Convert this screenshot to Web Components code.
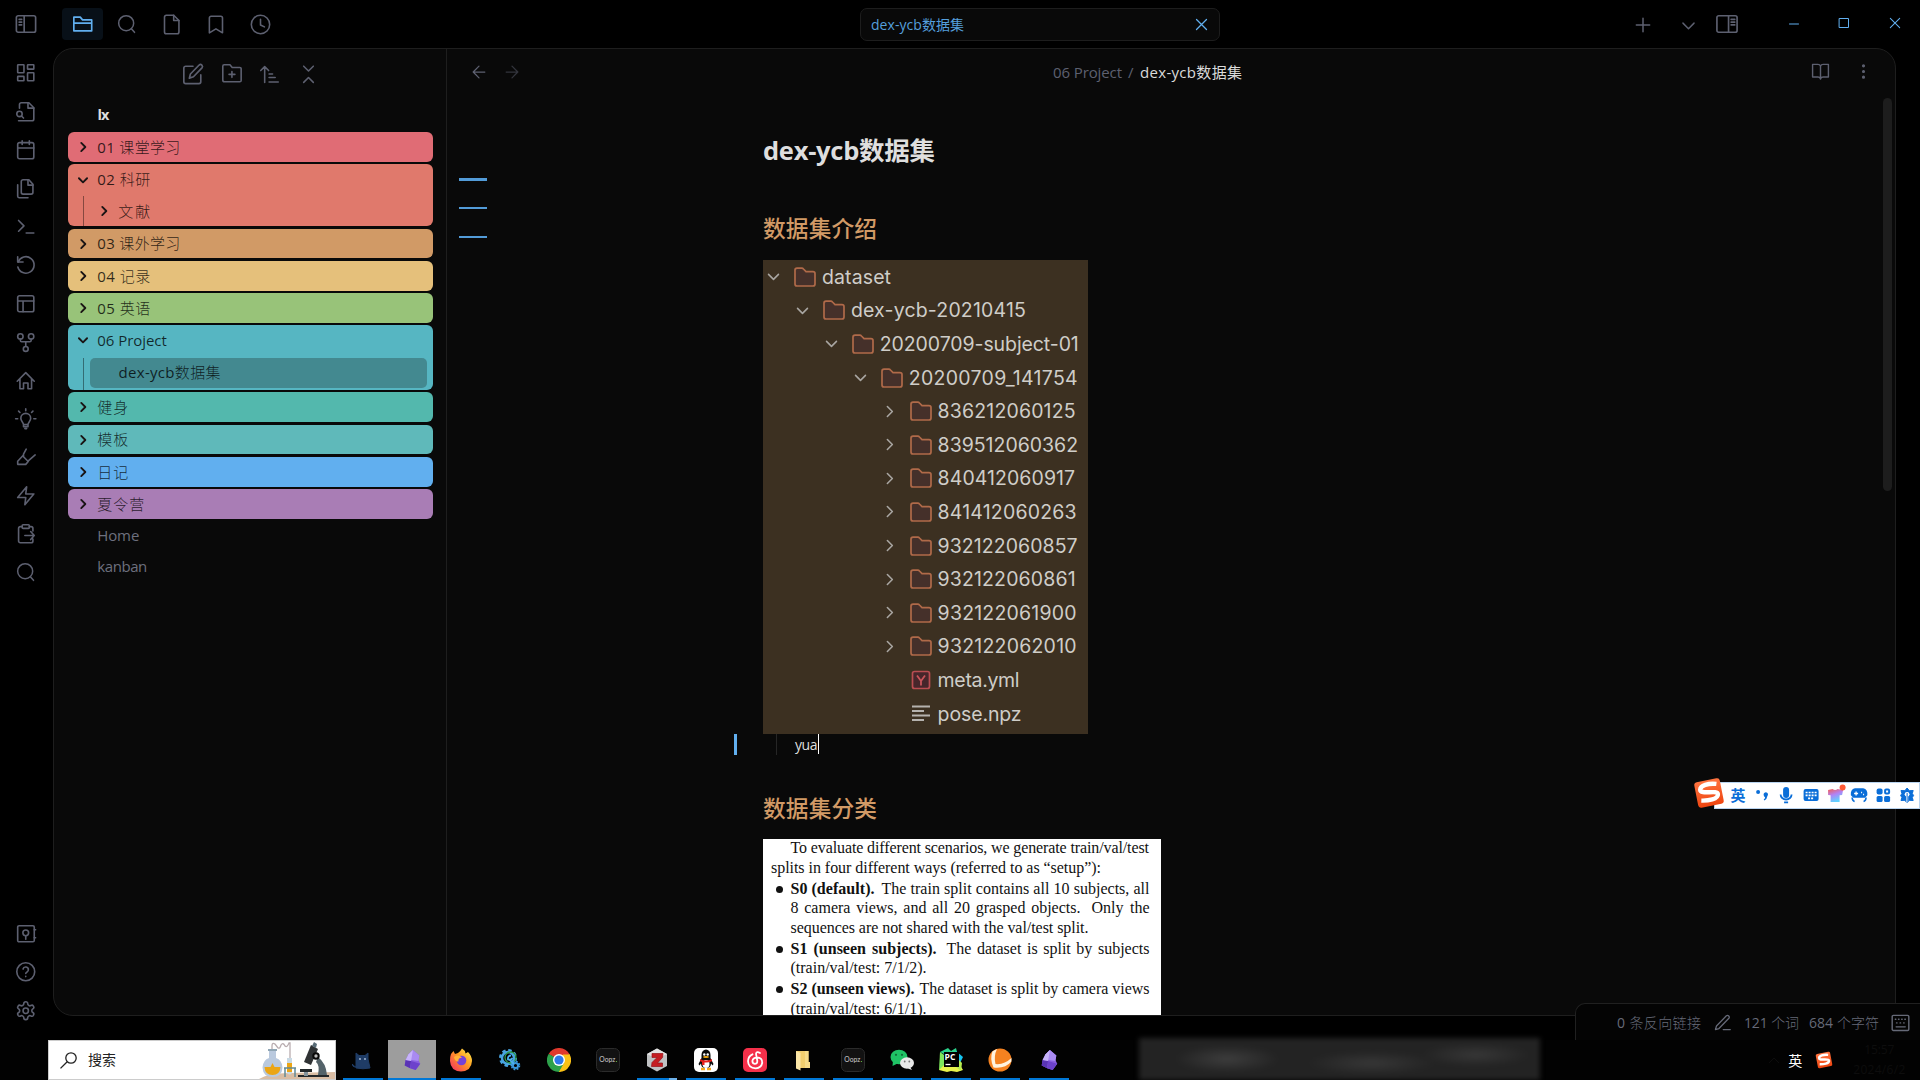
<!DOCTYPE html>
<html lang="zh-CN">
<head>
<meta charset="utf-8">
<title>dex-ycb数据集</title>
<style>
html,body{margin:0;padding:0;background:#000;overflow:hidden}
body{width:1920px;height:1080px;font-family:"Open Sans","Noto Sans CJK SC",sans-serif}
</style>
</head>
<body>
<notes-desktop></notes-desktop>
<script>
const define=(name,html,setup)=>customElements.define(name,class extends HTMLElement{
  constructor(){super();this.attachShadow({mode:'open'})}
  connectedCallback(){
    if(this.ready)return;this.ready=true;
    this.shadowRoot.innerHTML=typeof html==='function'?html(this):html;
    if(setup)setup(this);
  }
});

/* Text set to an exact measure by distributing the difference between letters or words.
   With "mix", Latin runs keep a regular weight beside light CJK glyphs. */
define('fit-text',`<style>:host{display:block;white-space:pre;flex:none}span{display:inline-block}</style><span><slot></slot></span>`,el=>{
  const s=el.shadowRoot.querySelector('span'),w=+el.getAttribute('w'),t=el.textContent;
  if(el.hasAttribute('mix'))el.innerHTML=t.replace(/[\x20-\x7e]+/g,'<span style="font-weight:400">$&</span>');
  el.style.width=w+'px';
  const word=el.hasAttribute('words'),n=word?t.split(' ').length-1:t.length-1;
  const d=(w-s.getBoundingClientRect().width)/Math.max(n,1);
  s.style[word?'wordSpacing':'letterSpacing']=d+'px';
});

const I={
 left:'<rect x="1.5" y="3" width="21" height="18" rx="2"/><path d="M10 3v18M4.5 7h2.8M4.5 10h2.8M4.5 13h2.8"/>',
 right:'<rect x="1" y="3" width="22" height="18" rx="2"/><path d="M13.7 3v18M16.5 7h4M16.5 10h4M16.5 13h4"/>',
 folderopen:'<path d="M2 19.5V4.5h7l2.5 3H21.5v12zM2 11h19.5" stroke-linejoin="round"/>',
 search:'<circle cx="11" cy="11" r="9"/><path d="m21 22-3.8-4.3"/>',
 file:'<path d="M14.5 1.5H6a2 2 0 0 0-2 2v17a2 2 0 0 0 2 2h12.500a2 2 0 0 0 2-2V7.500z"/><path d="M14.500 1.500v6h6"/>',
 bookmark:'<path d="m20 21.500-7.500-4.500L5 21.500V4.500a2 2 0 0 1 2-2h11a2 2 0 0 1 2 2z"/>',
 clock:'<circle cx="12" cy="12" r="10.500"/><path d="M12 6v6.500l4.500 2.200"/>',
 dash:'<rect x="3" y="3" width="7" height="9" rx=".6"/><rect x="14" y="3" width="7" height="5" rx=".6"/><rect x="14" y="12" width="7" height="9" rx=".6"/><rect x="3" y="16" width="7" height="5" rx=".6"/>',
 filesearch:'<path d="M5 8V4a2 2 0 0 1 2-2h8.500L21 7.500V20a2 2 0 0 1-2 2H4"/><path d="M14.500 2v6H21"/><circle cx="5" cy="14.500" r="3"/><path d="m9.500 19-2.300-2.300"/>',
 calendar:'<rect x="3" y="4" width="18" height="18" rx="2"/><path d="M16 2v4M8 2v4M3 10h18"/>',
 copy:'<path d="M15.500 2H9a2 2 0 0 0-2 2v12a2 2 0 0 0 2 2h9a2 2 0 0 0 2-2V7z"/><path d="M14.500 2v6H20M3 7.600V20.500a1.500 1.500 0 0 0 1.500 1.500H14.500"/>',
 term:'<path d="m4 17 6-6-6-6M12.500 19H21"/>',
 undo:'<path d="M3 3v6h6"/><path d="M3.500 9a9.200 9.200 0 1 1-.3 5.500"/>',
 layout:'<rect x="3" y="3" width="18" height="18" rx="2"/><path d="M3 9h18M9 9v12"/>',
 fork:'<circle cx="12" cy="20" r="2.700"/><circle cx="6" cy="6" r="3"/><circle cx="18" cy="6" r="3"/><path d="M6 9v1.500A1.500 1.500 0 0 0 7.500 12h9a1.500 1.500 0 0 0 1.500-1.500V9M12 12v5"/>',
 home:'<path d="M2.500 12.500 12 3l9.500 9.500M5.500 10v11H9.500v-6.500h5V21h4V10"/>',
 bulb:'<path d="M9.500 18.500C9.500 16 6.500 15 6.500 11.500a5.500 5.500 0 0 1 11 0c0 3.500-3 4.500-3 7v2.500h-5zM9.500 18.500h5M12 3V1M5.500 5 4 3.500M18.500 5 20 3.500M3 12H.700M23.300 12H21M11 23h2"/>',
 marker:'<path d="M12.500 3.500 9.500 9v3l5 5 8-7M9.500 10 3 17v3.500h9l3-3.500"/>',
 zap:'<path d="M13 2 3 14h9l-1 8 10-12h-9z"/>',
 clip:'<rect x="8" y="2" width="8" height="4" rx="1"/><path d="M16 4h2a2 2 0 0 1 2 2v3M20 18v2a2 2 0 0 1-2 2H6a2 2 0 0 1-2-2V6a2 2 0 0 1 2-2h2M11 14h10.500M17.500 9.500l4 4.500-4 4.500"/>',
 vault:'<rect x="3" y="3" width="18.500" height="18" rx="1.500"/><circle cx="12" cy="11" r="3.200"/><path d="M12 14.200V18M21.500 7.500h1.500M21.500 16.500h1.500"/>',
 help:'<circle cx="12" cy="12" r="10"/><path d="M9 9a3 3 0 0 1 5.900 1c0 2-2.900 2.500-2.900 4M12 17v.4"/>',
 gear:'<circle cx="12" cy="12" r="3"/><path d="M12.200 2h-.4a2 2 0 0 0-2 2v.2a2 2 0 0 1-1 1.700l-.4.300a2 2 0 0 1-2 0l-.2-.1a2 2 0 0 0-2.700.7l-.2.400a2 2 0 0 0 .7 2.700l.2.100a2 2 0 0 1 1 1.700v.5a2 2 0 0 1-1 1.700l-.2.100a2 2 0 0 0-.7 2.700l.2.400a2 2 0 0 0 2.700.7l.2-.1a2 2 0 0 1 2 0l.4.300a2 2 0 0 1 1 1.700v.2a2 2 0 0 0 2 2h.4a2 2 0 0 0 2-2v-.2a2 2 0 0 1 1-1.700l.4-.3a2 2 0 0 1 2 0l.2.100a2 2 0 0 0 2.700-.7l.2-.4a2 2 0 0 0-.7-2.700l-.2-.1a2 2 0 0 1-1-1.700v-.5a2 2 0 0 1 1-1.700l.2-.1a2 2 0 0 0 .7-2.700l-.2-.4a2 2 0 0 0-2.700-.7l-.2.100a2 2 0 0 1-2 0l-.4-.3a2 2 0 0 1-1-1.700V4a2 2 0 0 0-2-2z"/>',
 edit:'<path d="M12 3.500H4A2 2 0 0 0 2 5.500V20.500a2 2 0 0 0 2 2H18.500a2 2 0 0 0 2-2V13"/><path d="M18.700 2.200a2.200 2.200 0 0 1 3.100 3.100L12.500 15l-4.500 1.500L9.200 12z"/>',
 newfolder:'<path d="M4 21h17a1.500 1.500 0 0 0 1.500-1.500V6.500A1.500 1.500 0 0 0 21 5h-8.500L10 2H3.500A1.500 1.500 0 0 0 2 3.500v15.500a2 2 0 0 0 2 2zM12.200 9.500v6.500M9 12.700h6.500"/>',
 sort:'<path d="M6.500 21V3M2 7.500 6.500 3 11 7.500M11.500 11.500h4M11.500 15.500H18.500M11.500 20.500H22"/>',
 collapse:'<path d="m6.500 2.500 5.500 5.500 5.500-5.500M6.500 21l5.500-5.500 5.500 5.500"/>',
 back:'<path d="M19 12H5M12 19l-7-7 7-7"/>', fwd:'<path d="M5 12h14M12 5l7 7-7 7"/>',
 book:'<path d="M2 3h6.500A3.500 3.500 0 0 1 12 5.500 3.500 3.500 0 0 1 15.500 3H22v16h-6.500A3.500 3.500 0 0 0 12 21.500 3.500 3.500 0 0 0 8.500 19H2zM12 5.500V21"/>',
 dots:'<g fill="currentColor"><circle cx="12" cy="4" r="1.300"/><circle cx="12" cy="12" r="1.300"/><circle cx="12" cy="20" r="1.300"/></g>',
 plus:'<path d="M12 4v16M4 12h16"/>', down:'<path d="m5 9 7 7 7-7"/>', rightc:'<path d="m9 5 7 7-7 7"/>',
 x:'<path d="M4 4l16 16M20 4 4 20"/>', min:'<path d="M3 12h18"/>', max:'<rect x="3" y="3" width="18" height="18"/>',
 pen:'<path d="M17.500 2.500a2.500 2.500 0 0 1 3.500 3.500L7 20.500l-5 1.500 1.500-5zM13 22h10"/>',
 kbd:'<rect x="1.500" y="3" width="21" height="19" rx="1.500"/><path d="M5.500 8h.6M9.500 8h.6M13.500 8h.6M17.500 8h.6M7 12.500h.6M11.500 12.500h.6M16 12.500h.6M6.500 17.500h11.500"/>'
};
define('line-icon',el=>{
  const s=el.getAttribute('size')||22,w=el.getAttribute('sw')||1.8;
  return `<style>:host{display:inline-flex;flex:none;align-items:center;justify-content:center}svg{display:block;overflow:visible}</style>
  <svg width="${s}" height="${s}" viewBox="0 0 24 24" fill="none" stroke="currentColor" stroke-width="${w}" stroke-linecap="round" stroke-linejoin="round">${I[el.getAttribute('name')]}</svg>`});

define('title-bar',`<style>
:host{display:flex;height:48px;align-items:flex-start;color:#5d6070;box-sizing:border-box}
.l,.r{display:flex;height:48px;align-items:center}
.l line-icon{width:44.400px;height:48px}
.l .t{width:52px;margin-right:10px}
.l .on{width:41px;height:32px;border-radius:4px;background:#081018;color:#61afef;margin-right:2px}
.l{width:860px;flex:none}
.tab{display:flex;flex:none;align-items:center;justify-content:space-between;box-sizing:border-box;width:360px;height:33px;margin-top:8px;border:1px solid #1d1d1d;border-radius:7px;background:#090909;color:#559fdc;padding:0 10px 0 10px;font-size:14px;line-height:30px}
.tab line-icon{color:#61afef}
.r{margin-left:400px;flex:1}
.r .b{color:#61afef}
</style>
<div class="l"><line-icon class="t" name="left" size="22"></line-icon><line-icon class="on" name="folderopen"></line-icon><line-icon name="search" size="20"></line-icon><line-icon name="file" size="21"></line-icon><line-icon name="bookmark" size="21"></line-icon><line-icon name="clock" size="21"></line-icon></div>
<div class="tab"><fit-text w="93">dex-ycb数据集</fit-text><line-icon name="x" size="15" sw="2"></line-icon></div>
<div class="r"><line-icon name="plus" size="20" style="width:46px;margin-top:2px"></line-icon><line-icon name="down" size="19" style="width:44px;margin-top:2px"></line-icon><line-icon name="right" style="width:34px" size="22"></line-icon><line-icon class="b" name="min" size="12" sw="2" style="margin-left:27px;width:46px"></line-icon><line-icon class="b" name="max" size="12" sw="2" style="width:54px;margin-top:-2px"></line-icon><line-icon class="b" name="x" size="14" sw="1.800" style="width:48px;margin-top:-2px"></line-icon></div>`);

define('side-ribbon',`<style>
:host{display:flex;flex-direction:column;justify-content:space-between;width:53px;box-sizing:border-box;padding:6px 0 19px;color:#5d6070}
div{display:flex;flex-direction:column}line-icon{height:38.400px;width:52px}
</style><div>${['dash','filesearch','calendar','copy','term','undo','layout','fork','home','bulb','marker','zap','clip','search'].map(n=>`<line-icon name="${n}" size="${n==='search'?20:21.500}"></line-icon>`).join('')}</div>
<div style="margin-bottom:-8.500px">${['vault','help','gear'].map(n=>`<line-icon name="${n}" size="21.500"></line-icon>`).join('')}</div>`);

/* One row of the file tree. */
define('tree-row',el=>`<style>
:host{display:flex;align-items:center;height:${el.getAttribute('h')||30}px;font-size:15px;line-height:29px;box-sizing:border-box}
line-icon{width:30px;height:30px;color:#1a1414}i{width:30px}
::slotted(fit-text){margin-left:-.7px}
</style>${el.hasAttribute('icon')?`<line-icon name="${el.getAttribute('icon')}" size="14" sw="3.200"></line-icon>`:'<i></i>'}<slot></slot>`);
define('tree-group',el=>`<style>
:host{display:flex;flex-direction:column;border-radius:6px;box-sizing:border-box;background:${el.getAttribute('bg')};height:${el.getAttribute('h')}px;margin-bottom:${el.getAttribute('gap')||2.500}px;color:rgba(0,0,0,.78);overflow:hidden}
</style><slot></slot>`);

define('file-pane',`<style>
:host{display:flex;flex-direction:column;width:393px;box-sizing:border-box;border-right:1px solid #1e1e1e;color:#6a6d7c;font-weight:300}
nav{display:flex;padding:6px 0 1px 120px;height:38px;align-items:center;color:#5d6070}
nav line-icon{width:38.300px;height:38px}
.v{height:38px;margin-left:43.500px;line-height:41px;color:#ddd;font-weight:700;font-size:14.500px}
.tree{display:flex;flex-direction:column;padding:0 13px 0 14px}
.sub{display:flex;margin-left:15px;border-left:1px solid rgba(0,0,0,.4);flex:1;box-sizing:border-box}
.sub tree-row{margin-left:6px}
.cur{background:rgba(40,70,70,.4);border-radius:5px;width:337px;margin-top:-.5px}
.cur fit-text{margin-left:-1.500px}
.f{color:#6d707e}
</style>
<nav><line-icon name="edit"></line-icon><line-icon name="newfolder" size="21.500"></line-icon><line-icon name="sort" size="21"></line-icon><line-icon name="collapse" size="21"></line-icon></nav>
<div class="v"><fit-text w="12">lx</fit-text></div>
<div class="tree">
<tree-group bg="#e06c75" h="30" gap="2"><tree-row icon="rightc"><fit-text mix w="83">01 课堂学习</fit-text></tree-row></tree-group>
<tree-group bg="#e0796c" h="62" gap="3"><tree-row icon="down" h="32" style="padding-bottom:1px"><fit-text mix w="53">02 科研</fit-text></tree-row><div class="sub"><tree-row icon="rightc" style="margin-left:5px"><fit-text mix w="32">文献</fit-text></tree-row></div></tree-group>
<tree-group bg="#d19a66" h="29" gap="3"><tree-row icon="rightc" h="29"><fit-text mix w="83">03 课外学习</fit-text></tree-row></tree-group>
<tree-group bg="#e5c07b" h="30" gap="2"><tree-row icon="rightc"><fit-text mix w="53">04 记录</fit-text></tree-row></tree-group>
<tree-group bg="#98c379" h="30" gap="2"><tree-row icon="rightc"><fit-text mix w="53">05 英语</fit-text></tree-row></tree-group>
<tree-group bg="#56b6c2" h="65" gap="2"><tree-row icon="down" h="33" style="padding-bottom:3px"><fit-text mix w="69.500">06 Project</fit-text></tree-row><div class="sub"><tree-row class="cur"><fit-text mix w="102">dex-ycb数据集</fit-text></tree-row></div></tree-group>
<tree-group bg="#53b8ad" h="30" gap="3"><tree-row icon="rightc"><fit-text mix w="31">健身</fit-text></tree-row></tree-group>
<tree-group bg="#5fb9ba" h="29" gap="3"><tree-row icon="rightc" h="29"><fit-text mix w="31">模板</fit-text></tree-row></tree-group>
<tree-group bg="#61afef" h="30" gap="2"><tree-row icon="rightc"><fit-text mix w="31">日记</fit-text></tree-row></tree-group>
<tree-group bg="#a97db5" h="30" gap="1"><tree-row icon="rightc"><fit-text mix w="47">夏令营</fit-text></tree-row></tree-group>
<tree-row class="f" h="31"><fit-text mix w="42">Home</fit-text></tree-row>
<tree-row class="f" h="31"><fit-text mix w="50">kanban</fit-text></tree-row>
</div>`);

const rows=[[0,'dataset',69],[1,'dex-ycb-20210415',175],[2,'20200709-subject-01',199],[3,'20200709_141754',169],[4,'836212060125',138],[4,'839512060362',140.500],[4,'840412060917',137.500],[4,'841412060263',139],[4,'932122060857',140],[4,'932122060861',138],[4,'932122061900',139],[4,'932122062010',139],['y','meta.yml',82],['t','pose.npz',84]];
define('dataset-tree',`<style>
:host{display:flex;flex-direction:column;width:325px;height:474px;background:#3c3021;box-sizing:border-box;font:400 19.500px Inter,sans-serif;color:#cfcdc8;overflow:hidden}
div{display:flex;align-items:center;height:33.600px;flex:none}
line-icon{width:21px;color:#a9a6a2}svg{flex:none;margin:0 6px 0 10px}
</style>${rows.map(([d,t,w])=>{const f=typeof d==='number',n=f?d:4;
return `<div style="padding-left:${n*28.900}px">${f?`<line-icon name="${d<4?'down':'rightc'}" size="17" sw="2.200"></line-icon>`:'<i style="width:21px"></i>'}<svg width="22" height="20" viewBox="0 0 22 20" fill="none">${
f?'<path d="M1 3.200A2 2 0 0 1 3 1.200h4.800q1 0 1.700.8L12 4.600h7a2 2 0 0 1 2 2V17a2 2 0 0 1-2 2H3a2 2 0 0 1-2-2z" fill="#45302a" stroke="#b06a49" stroke-width="1.700"/>'
:d==='y'?'<rect x="2.500" y="1.500" width="17" height="17" rx="2" fill="#47262b" stroke="#b94d52" stroke-width="1.700"/><path d="M7 5.500l4 5.500 4-5.500M11 11v4.500" stroke="#c9545a" stroke-width="1.800"/>'
:'<path d="M2 2.500h18M2 7h12M2 11.500h18M2 16h12" stroke="#b5b2ae" stroke-width="1.800"/>'}</svg><fit-text w="${w}">${t}</fit-text></div>`}).join('')}`);

define('paper-excerpt',`<style>
:host{display:flex;flex-direction:column;width:398px;height:177px;background:#fff;color:#111;font:16px/19.400px "Liberation Serif",serif;overflow:hidden;box-sizing:border-box}
div{display:flex;justify-content:space-between;width:359px;margin-left:27.500px;flex:none;height:19.400px}
.first{margin-top:-.6px}
.g{margin-top:1.600px}
.g::before{content:"";width:7px;height:7px;border-radius:50%;background:#111;margin:7px 7.500px 0 -14.500px;flex:none}
.g fit-text:last-child{margin-left:auto}
</style>
<div class="first"><fit-text w="358.500">To evaluate different scenarios, we generate train/val/test</fit-text></div>
<div style="margin-left:8px"><fit-text w="330">splits in four different ways (referred to as “setup”):</fit-text></div>
<div class="g"><fit-text w="84"><b>S0 (default).</b></fit-text><fit-text w="268" words>The train split contains all 10 subjects, all</fit-text></div>
<div><fit-text w="290" words>8 camera views, and all 20 grasped objects.</fit-text><fit-text w="58" words>Only the</fit-text></div>
<div><fit-text w="298">sequences are not shared with the val/test split.</fit-text></div>
<div class="g" style="margin-top:2px"><fit-text w="146" words><b>S1 (unseen subjects).</b></fit-text><fit-text w="203" words>The dataset is split by subjects</fit-text></div>
<div><fit-text w="136">(train/val/test: 7/1/2).</fit-text></div>
<div class="g" style="margin-top:1.600px"><fit-text w="124"><b>S2 (unseen views).</b></fit-text><fit-text w="230">The dataset is split by camera views</fit-text></div>
<div><fit-text w="136">(train/val/test: 6/1/1).</fit-text></div>`);

define('note-editor',`<style>
:host{display:flex;flex-direction:column;flex:1;min-width:0}
header{display:flex;align-items:center;height:45px;color:#5d6070;font-size:15px}
header .n{display:flex;width:606px;padding-left:15px;box-sizing:border-box}header .n line-icon{width:33px}
header .p{display:flex;gap:6px;line-height:44px}
.p b{font-weight:400;color:#dadada}
.body{display:flex;flex:1;min-height:0}
.out{display:flex;flex-direction:column;width:275px;padding:84px 0 0 12px;box-sizing:border-box}
.out i{width:28px;height:2px;background:#529bd8;margin-bottom:27px}.out i:first-child{height:3px;margin-bottom:26px}
article{display:flex;flex-direction:column;width:1174px;flex:1;padding-left:41px;min-height:0;overflow:hidden}
h1{margin:34.500px 0 0;font-size:25.500px;line-height:42px;height:42px;color:#dedede;font-weight:700}
h2{margin:0;font-size:22.700px;line-height:34px;height:34px;color:#d19a66;font-weight:500}
.line{display:flex;height:22px;margin-left:-29px;border-left:3px solid #61afef;font:400 14px/21px "Open Sans",sans-serif;color:#ddd}
.line div{margin-left:39px;border-left:1px solid #262626;padding-left:18px;display:flex}
.line i{width:1px;height:20px;background:#fff}
.scroll{width:9px;height:393px;border-radius:5px;background:#1d1d1d;margin:4px 3px 0 0}
</style>
<header><div class="n"><line-icon name="back" size="20" sw="1.500"></line-icon><line-icon name="fwd" size="20" sw="1.500" style="opacity:.5"></line-icon></div>
<div class="p"><fit-text w="69">06 Project</fit-text><span style="width:6px">/</span><b><fit-text w="102">dex-ycb数据集</fit-text></b></div>
<line-icon name="book" size="19" style="margin-left:569px"></line-icon><line-icon name="dots" size="17" style="margin-left:25px"></line-icon></header>
<div class="body"><div class="out"><i></i><i></i><i></i></div>
<article><h1><fit-text w="172">dex-ycb数据集</fit-text></h1>
<h2 style="margin-top:41px"><fit-text w="114">数据集介绍</fit-text></h2>
<dataset-tree style="margin-top:14.500px;flex:none"></dataset-tree>
<div class="line"><div><fit-text w="22.500">yua</fit-text><i></i></div></div>
<h2 style="margin-top:36.500px"><fit-text w="114">数据集分类</fit-text></h2>
<paper-excerpt style="margin-top:13.500px;flex:none"></paper-excerpt></article>
<div class="scroll"></div></div>`);

define('status-bar',`<style>
:host{display:flex;align-items:center;position:absolute;left:1575px;top:1003px;width:345px;height:37px;box-sizing:border-box;border:1px solid #202020;border-width:1px 0 0 1px;border-top-left-radius:10px;background:#040404;color:#666a78;font-size:14px;font-weight:300;padding-left:41px;line-height:37px}
</style><fit-text mix w="84">0 条反向链接</fit-text><line-icon name="pen" size="17" style="margin:0 13px"></line-icon><fit-text mix w="55">121 个词</fit-text><fit-text mix w="70" style="margin:0 12px 0 10px">684 个字符</fit-text><line-icon name="kbd" size="19" sw="1.800"></line-icon>`);

define('sogou-logo',el=>`<style>:host{display:block;flex:none}svg{display:block}</style><svg width="${el.getAttribute('size')}" height="${el.getAttribute('size')}" viewBox="0 0 32 32"><defs><linearGradient id="g" x2="0" y2="1"><stop stop-color="#ff7440"/><stop offset="1" stop-color="#ee4510"/></linearGradient></defs><g transform="rotate(-11 16 16)"><rect x="3" y="3" width="26" height="26" rx="3" fill="url(#g)"/><path d="M25 8.500C17 6 9 7 8 11c-1 5.500 17 3 16.500 8-.6 5-11 4.500-17.500 3" fill="none" stroke="#fff" stroke-width="4.400"/></g></svg>`);

define('ime-bar',`<style>
:host{position:absolute;left:1693px;top:777px;display:flex;align-items:center;height:32px;width:227px}
sogou-logo{z-index:1;position:relative}
.b{display:flex;align-items:center;background:#fff;border:1px solid #b9d4f0;box-sizing:border-box;height:27px;width:206px;margin:4px 0 0 -11px;padding-left:11px;color:#0a6ed8;font:700 15px/24px "Noto Sans CJK SC",sans-serif}
.b>*{width:24.200px;flex:none;display:block;text-align:center}
</style><sogou-logo size="32"></sogou-logo><div class="b"><span>英</span>
<svg height="20" viewBox="0 0 24 20" fill="#0a6ed8"><circle cx="8" cy="7" r="2"/><path d="M13.500 9.500a2.200 2.200 0 1 1 3.800 1.500q-.3 3-3 4.500l-.7-1q1.500-1 1.400-2.200-1.500-.8-1.500-2.800z"/></svg>
<svg height="20" viewBox="0 0 24 20"><rect x="9" y="2" width="6" height="11" rx="3" fill="#0a6ed8"/><path d="M6.500 9.500a5.500 5 0 0 0 11 0M10 17.300h4" fill="none" stroke="#0a6ed8" stroke-width="1.800"/></svg>
<svg height="20" viewBox="0 0 24 20"><rect x="4.500" y="4" width="15" height="12" rx="2" fill="#0a6ed8"/><path d="M6.500 7.500h11M6.500 10.300h11M9 13.300h6" stroke="#fff" stroke-width="1.700" stroke-dasharray="2 1"/></svg>
<svg height="22" viewBox="0 0 24 22"><defs><linearGradient id="s" x2=".4" y2="1"><stop stop-color="#f65a4e"/><stop offset=".5" stop-color="#b183f5"/><stop offset="1" stop-color="#60d2ff"/></linearGradient></defs><path d="M5 6 9.500 5q2.500 2 5 0L20 6l-1 5-2.500.3V18h-9v-6.700L5 11z" fill="url(#s)"/><circle cx="19.500" cy="3.500" r="3" fill="#ff5a36"/></svg>
<svg height="20" viewBox="0 0 24 20"><path d="M8 4h8q4 1 3.500 6l-2 2h-11l-2-2Q4 5 8 4zM5 12.500q0 3 2.500 4M19 12.500q0 3-2.500 4" fill="#0a6ed8" stroke="#0a6ed8" stroke-width="1.500"/><path d="M7 8.500h4M9 6.500v4M14 7.500h1M16 9.500h1" stroke="#fff" stroke-width="1.300"/></svg>
<svg height="20" viewBox="0 0 24 20" fill="#0a6ed8"><rect x="5.500" y="3.500" width="6" height="6" rx="2"/><rect x="14" y="4.500" width="4" height="4" rx="1" fill="none" stroke="#0a6ed8" stroke-width="2"/><rect x="5.500" y="11" width="6" height="6" rx="1.500"/><rect x="13" y="11" width="6" height="6" rx="1.500"/></svg>
<svg height="20" viewBox="0 0 24 20"><path d="M12 3l2.200 2.700 3.900-.2-.9 3 1.300 2-1.300 2 .9 3-3.900-.2L12 18l-2.200-2.700-3.900.2.900-3-1.300-2 1.300-2-.9-3 3.900.2z" fill="#0a6ed8" stroke="#0a6ed8" stroke-linejoin="round"/><circle cx="12" cy="9.300" r="2.400" fill="#fff"/><path d="M12 9v9" stroke="#fff" stroke-width="2.200"/><path d="M12 8v10" stroke="#0a6ed8" stroke-width="1"/></svg></div>`);

const crystal='<path d="M13 1 20 7l-1 5 2 4-5 7-6-2-6-3 1-6 3-6z" fill="#8a5fe0"/><path d="M13 1 8 6l3 6 8 1 1-6z" fill="#a98af2"/><path d="M5 12l6 1-1 8-6-3z" fill="#5a34b5"/><path d="M11 13l10 3-5 7-6-2z" fill="#6d42cc"/><path d="M13 1 8 6l-3 6 6 1z" fill="#c7b3fb"/>';
const oopz='<rect x=".5" y=".5" width="23" height="23" rx="5" fill="#121212" stroke="#2b2b2b"/><text x="3.300" y="14" textLength="16" lengthAdjust="spacingAndGlyphs" font-family="Lato" font-size="7" fill="#ccc">Oopz</text><circle cx="20.500" cy="13.500" r=".6" fill="#65c94b"/>';
const A={
cat:'<path d="M5 20V5l3 2.500h6L17 5v6l2 9q-7 1.500-14 0zM5 19q-4 0-3.500-3" fill="#1f3c66" stroke="#1f3c66"/><circle cx="9" cy="11" r=".9" fill="#adc2dc"/><circle cx="14" cy="11" r=".9" fill="#adc2dc"/>',
obs:crystal,
fox:'<defs><linearGradient id="f" x1="1" x2="0" y2="1"><stop stop-color="#fff44f"/><stop offset=".45" stop-color="#ff9a22"/><stop offset="1" stop-color="#f52668"/></linearGradient></defs><path d="M2 6 4.500 3 6 6l3-1q2-1 4-4.500 3 1.500 3.500 5L19 4q4 4 4 9-.5 10-11 10.500Q1.500 23 1 13q-.2-4 1-7z" fill="url(#f)"/><circle cx="12.500" cy="12.500" r="4.800" fill="#7542d8"/><path d="M5 9q4-3 8 .500l-3 1q-1 1.500-.5 3Q6 14 5 9z" fill="#ffb136"/>',
cog:'<circle cx="10" cy="10" r="7.500" fill="none" stroke="#48a4e0" stroke-width="3" stroke-dasharray="3.300 2.590"/><circle cx="10" cy="10" r="6" fill="none" stroke="#48a4e0" stroke-width="2.500"/><circle cx="12.500" cy="9.500" r="5.500" fill="none" stroke="#2f9a4a" stroke-width="1.300"/><circle cx="17.500" cy="17.500" r="2.600" fill="none" stroke="#3a97da" stroke-width="2"/><circle cx="17.500" cy="17.500" r="4" fill="none" stroke="#3a97da" stroke-width="1.600" stroke-dasharray="1.800 1.340"/><path d="m12 12 4 4M13 7.500q-3.500 0-3 4 3 1 4.500-1.500" fill="none" stroke="#4eb1ee" stroke-width="1.800"/>',
chrome:'<path d="M12 12 1.600 6A12 12 0 0 1 22.400 6z" fill="#e0392d"/><path d="M12 12 22.400 6A12 12 0 0 1 12 24z" fill="#fbc116"/><path d="M12 12v12A12 12 0 0 1 1.600 6z" fill="#2da14b"/><path d="M1.600 6 8 17l4-5zM12 24l6-9-6-3z" fill="#2da14b"/><path d="M12 24 17.500 14 12 12 16 6.500h6.500Q26 18 12 24z" fill="#fbc116"/><circle cx="12" cy="12" r="6" fill="#fff"/><circle cx="12" cy="12" r="4.600" fill="#2d78ea"/>',
oopz,
zot:'<path d="M12 .5 22 6v12l-10 5.500L2 18V6z" fill="#bfc1c3"/><path d="M12 .5 22 6l-10 5L2 6z" fill="#e3e3e3"/><path d="M7 5.500h11l-.5 4-5 5.500h5v3.500H6.500l.5-4 5-5H7z" fill="#c51d22" stroke="#941217" stroke-width=".7"/>',
qq:'<rect width="24" height="24" rx="5" fill="#fff"/><path d="M7 21h4M13 21h4" stroke="#f4a91c" stroke-width="2.500"/><path d="M7.500 10V7a4.500 5.500 0 0 1 9 0v3l3 6-1 1.500-1.500-2q0 4.500-5 4.500t-5-4.500l-1.500 2-1-1.500z" fill="#0c0c0c"/><ellipse cx="12" cy="16" rx="3.500" ry="4" fill="#fff"/><path d="M6 11q6 3 12 0v2.200q-6 2.500-12 0zM8 13h2.500v4H8z" fill="#e71f19"/><circle cx="10.300" cy="6.500" r="1.200" fill="#fff"/><circle cx="13.700" cy="6.500" r="1.200" fill="#fff"/><ellipse cx="12" cy="9" rx="3" ry="1" fill="#f6ab12"/>',
net:'<rect width="24" height="24" rx="5" fill="#f5304a"/><path d="M17 5q-3.500-2-4 .8l1.300 7q.2 3-2.600 3-2.500-.3-2.300-3 .5-3 4.600-3.300 5.500 0 5.200 5.500-1 5-6.500 5.300-7.500-.3-7.700-7.300Q5.300 8 9.500 6.300" fill="none" stroke="#fff" stroke-width="1.800" stroke-linecap="round"/>',
dir:'<path d="M4 3h12.500v12H18v5H8z" fill="#f2cf6f"/><path d="M4 3l4.500 2v17.500L4 20.500z" fill="#fbe6a6"/><path d="M13 3h3.500v11H18v6h-5z" fill="#f7dc89"/>',
wx:'<ellipse cx="9" cy="9" rx="8.500" ry="7.300" fill="#1fc365"/><path d="M3 13l-.5 5 5-2.500z" fill="#1fc365"/><circle cx="6" cy="6.800" r="1.100" fill="#126a38"/><circle cx="12" cy="6.800" r="1.100" fill="#126a38"/><ellipse cx="17" cy="15" rx="7" ry="5.800" fill="#e9e9e9"/><path d="M20 19l2 3-4-1.500z" fill="#e9e9e9"/><circle cx="14.700" cy="13.500" r=".9" fill="#777"/><circle cx="19.300" cy="13.500" r=".9" fill="#777"/>',
pc:'<path d="M1 4 9 0l3 3 5-3 1 4-7 5z" fill="#2bd38b"/><path d="M17 3l7 6-3 6-6-5z" fill="#15c4f0"/><path d="M1 4l7 5-2 11-6 2z" fill="#7fe85c"/><path d="M0 22l5-5h16l3 5-6 2-6-1-4 1z" fill="#e9f34c"/><path d="M19 11l4 4-1 8-5-4z" fill="#b6ec50"/><rect x="5" y="4" width="15" height="15" fill="#000"/><text x="5.600" y="11.800" font-family="Open Sans" font-weight="700" font-size="8.500" fill="#fff">PC</text><path d="M6.500 16.500h5" stroke="#fff" stroke-width="1.300"/>',
ora:'<circle cx="12" cy="12" r="11.500" fill="#f58220"/><path d="M9 .9 4.500 3.300Q1.500 11 5.500 19.500 17 21 23.400 13.500l.1-3.500Q16 17 7.500 16 5.500 8 9 .9z" fill="#fff3df"/>'};
define('app-button',el=>{const on=el.hasAttribute('active'),i=el.getAttribute('icon');return `<style>
:host{display:flex;flex-direction:column;align-items:center;width:49px;height:40px;flex:none}
.b{width:48px;height:38px;display:flex;align-items:center;justify-content:center;box-sizing:border-box;padding-top:2px;${on?'background:#9d9d9d':''}}
.u{height:2px;width:${on?48:40}px;background:${el.hasAttribute('idle')?'none':el.hasAttribute('split')?'linear-gradient(90deg,#0078d7 80%,#6db1ea 80%)':'#0078d7'}}
</style><div class="b"><svg width="${i==='obs'?22:24}" height="${i==='obs'?22:24}" viewBox="0 0 24 24">${A[i]}</svg></div><div class="u"></div>`});

define('task-bar',`<style>
:host{display:flex;height:40px;background:#020202;padding-left:48px}
.s{display:flex;align-items:center;box-sizing:border-box;width:288px;height:40px;border:1px solid #ccc;background:#fff;color:#222;font-size:14px;padding-left:11px;line-height:36px}
.s .a{margin-left:auto}
.apps{display:flex;margin-left:2.500px}
.blur{width:402px;height:42px;margin:-2px 0 0 66px;background:radial-gradient(ellipse 52px 14px at 22% 50%,#3d3d3d,transparent),radial-gradient(ellipse 64px 12px at 58% 60%,#373737,transparent),radial-gradient(ellipse 54px 12px at 84% 40%,#373737,transparent),#232323;filter:blur(2.500px)}
.t{display:flex;align-items:center;margin-left:228px;color:#fff;font-size:14px;width:152px;height:40px}
.c{display:flex;flex-direction:column;align-items:center;font-size:12px;line-height:20px;color:#0d0d0d;margin-left:19px;width:54px}
</style>
<div class="s"><svg width="17" height="17" viewBox="0 0 17 17" fill="none" stroke="#222" stroke-width="1.300"><circle cx="11" cy="6" r="5.200"/><path d="M7.200 9.700.500 16.400"/></svg><fit-text w="28" style="margin-left:11px">搜索</fit-text>
<svg class="a" width="76" height="38" viewBox="0 0 76 38"><path d="M0 38q9-6 30-6l46-1v7z" fill="#d9bda4"/><path d="M13 9V5q0-4 3-2l3 4q2 1 3-3 2-3 4 1 2 2 4-3h1V17" fill="none" stroke="#b9adb0" stroke-width="1.300"/><path d="M10 9h7v8q6 2 6.500 9.500Q23 36 13.500 36T3.500 26.500Q4 19 10 17z" fill="#b9c9de"/><path d="M5.500 26h16q-.5 8-8 8t-8-8zM13.500 22l2 4h-4z" fill="#eba515"/><path d="M9 9h9" stroke="#8fa5b4" stroke-width="2"/><path d="M28 17h5v15q-2.500 3-5 0z" fill="#c8d9e4"/><path d="M28 22h5v9h-5z" fill="#eba515"/><path d="M25 27h12M26 27v9M36 27v9" stroke="#638a97" stroke-width="1.500"/><path d="M52 4l7 4-7 16-7-3z" fill="#2f3234"/><path d="M55 1l3 2-1 4-4-2z" fill="#586b76"/><path d="M59 16q8 6 9 18h-9q2-10-2-13z" fill="#54636a"/><path d="M41 28h12v3H41zM39 34h31v2H39z" fill="#22272a"/><path d="M45 31h4v4h-4z" fill="#82919a"/><circle cx="57" cy="15" r="2.700" fill="#bbb" stroke="#090909" stroke-width="2"/></svg></div>
<div class="apps">${[['cat'],['obs','active'],['fox'],['cog','idle'],['chrome','idle'],['oopz','idle'],['zot','split'],['qq'],['net'],['dir'],['oopz'],['wx'],['pc'],['ora'],['obs']].map(([n,a=''])=>`<app-button icon="${n}" ${a}></app-button>`).join('')}</div>
<div class="blur"></div>
<div class="t"><svg width="12" height="7" viewBox="0 0 12 7"><path d="m1 6 5-5 5 5" fill="none" stroke="#0d0d0d"/></svg><span style="margin:0 13px 0 8px">英</span><sogou-logo size="18"></sogou-logo><div class="c"><fit-text w="30">15:57</fit-text><fit-text w="52">2024/6/2</fit-text></div></div>`);

define('notes-desktop',`<style>
:host{display:flex;flex-direction:column;width:1920px;height:1080px;background:#000;position:relative;overflow:hidden}
.mid{display:flex;height:992px}
.panel{display:flex;box-sizing:border-box;width:1843px;height:968px;border:1px solid #1e1e1e;border-radius:20px 20px 12px 20px;background:#090909;overflow:hidden}
task-bar{box-sizing:border-box}
</style><title-bar></title-bar><div class="mid"><side-ribbon></side-ribbon><div class="panel"><file-pane></file-pane><note-editor></note-editor></div></div><task-bar></task-bar><status-bar></status-bar><ime-bar></ime-bar>`);
</script>
</body>
</html>
